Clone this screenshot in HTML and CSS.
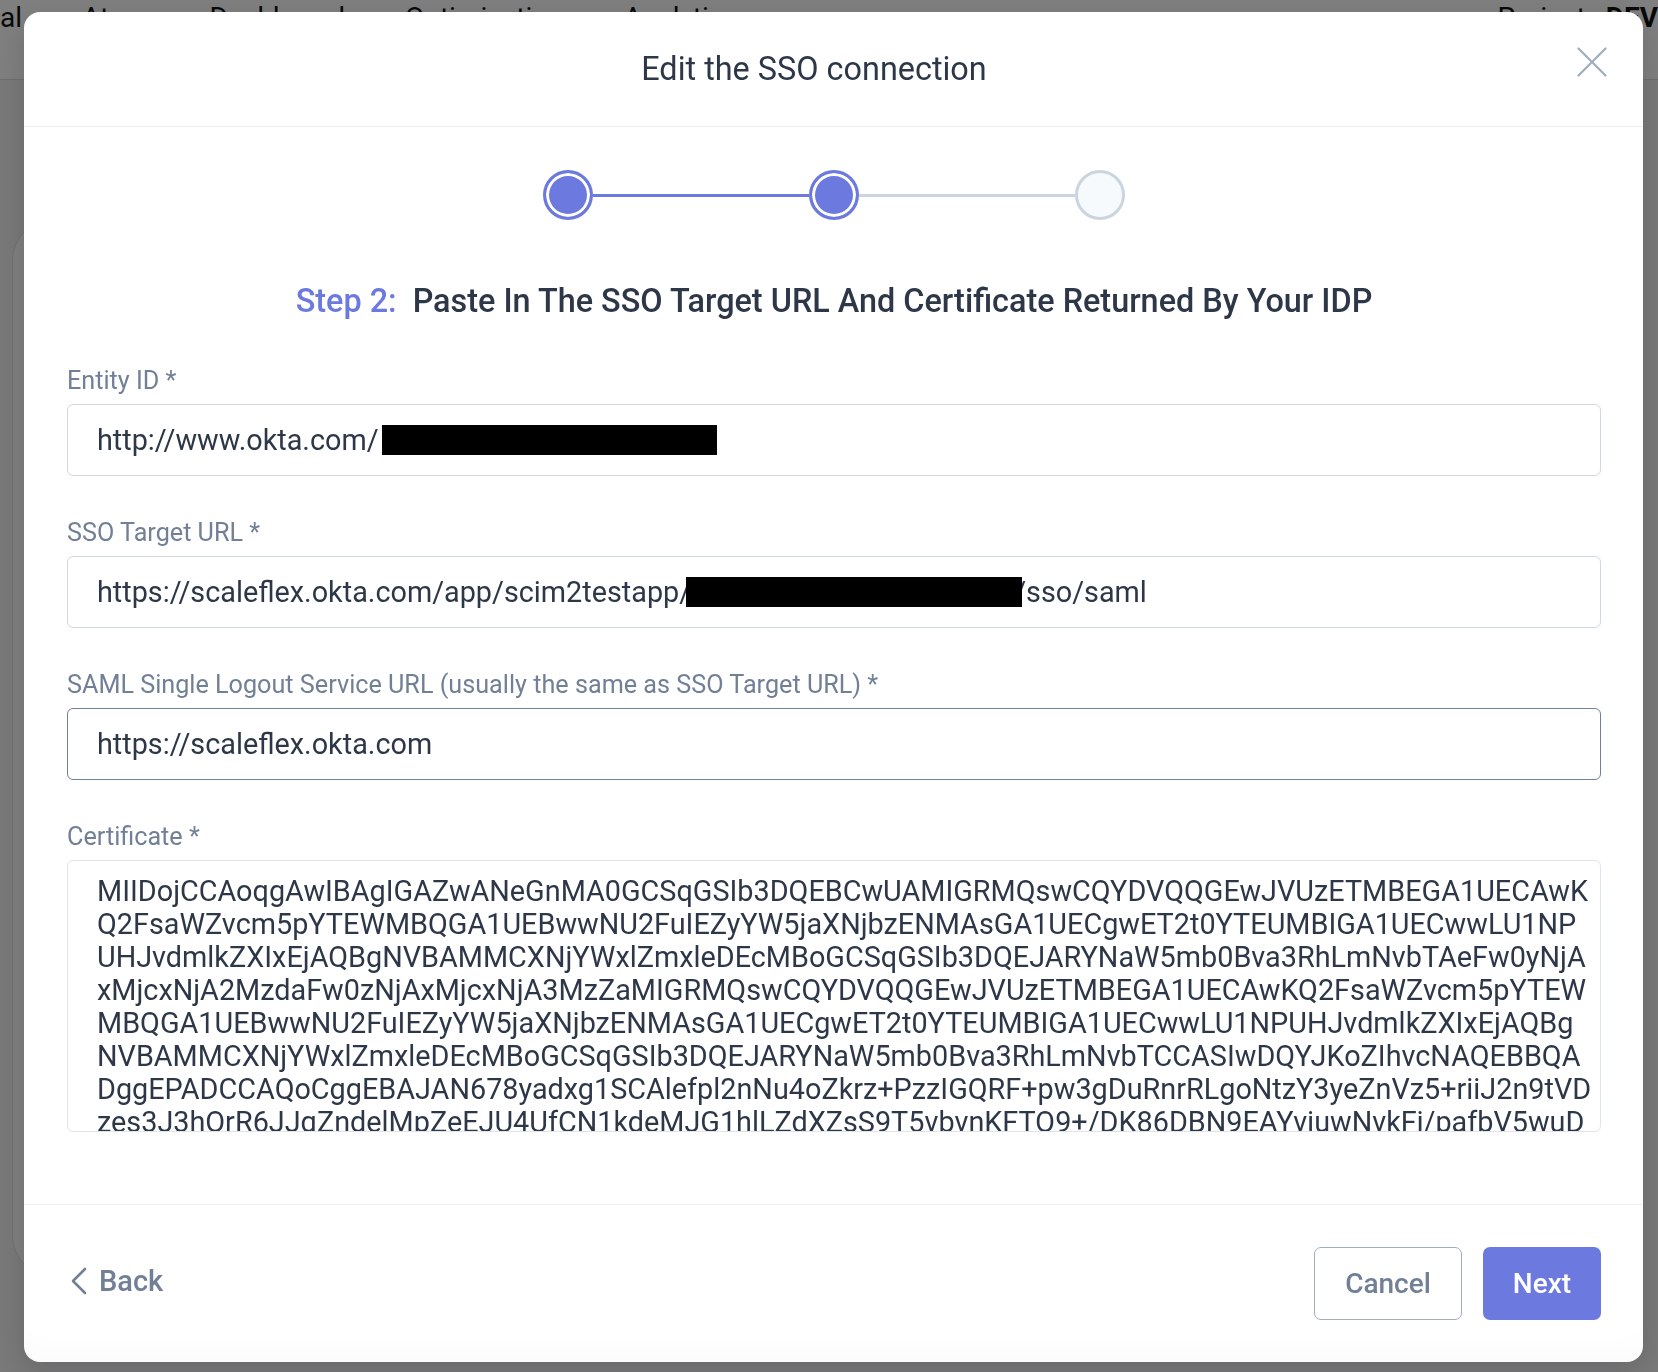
FILE: index.html
```html
<!DOCTYPE html>
<html lang="en">
<head>
<meta charset="utf-8">
<title>Edit the SSO connection</title>
<link rel="stylesheet" href="styles.css">
</head>
<body>
<div class="page">
  <header class="topnav">
    <span class="nav-item">al</span>
    <span class="nav-item">Atom</span>
    <span class="nav-item">Dashboard</span>
    <span class="nav-item">Optimization</span>
    <span class="nav-item">Analytics</span>
    <span class="nav-spacer"></span>
    <span class="nav-item">Project</span>
    <span class="nav-item nav-strong">DEV</span>
  </header>
  <main class="page-main">
    <div class="page-card"></div>
  </main>
</div>

<div class="overlay">
  <div class="modal">
    <div class="modal-header">
      <h2 class="modal-title">Edit the SSO connection</h2>
      <button class="close-btn" type="button" aria-label="Close">
        <svg width="30" height="30" viewBox="0 0 30 30" fill="none" stroke="#a0aec0" stroke-width="2.2" stroke-linecap="round"><path d="M1.5 1.5 L28.5 28.5 M28.5 1.5 L1.5 28.5"/></svg>
      </button>
    </div>

    <div class="modal-body">
      <div class="stepper">
        <span class="dot dot-active"></span>
        <span class="bar bar-active"></span>
        <span class="dot dot-active"></span>
        <span class="bar"></span>
        <span class="dot"></span>
      </div>

      <h3 class="step-title"><span class="step-num">Step 2:</span>Paste In The SSO Target URL And Certificate Returned By Your IDP</h3>

      <div class="field">
        <label class="field-label">Entity ID *</label>
        <div class="input">http://www.okta.com/<span class="redact redact-a"></span></div>
      </div>

      <div class="field">
        <label class="field-label">SSO Target URL *</label>
        <div class="input">https://scaleflex.okta.com/app/scim2testapp/<span class="redact redact-b"></span>/sso/saml</div>
      </div>

      <div class="field">
        <label class="field-label">SAML Single Logout Service URL (usually the same as SSO Target URL) *</label>
        <div class="input input-focus">https://scaleflex.okta.com</div>
      </div>

      <div class="field">
        <label class="field-label">Certificate *</label>
        <div class="textarea">MIIDojCCAoqgAwIBAgIGAZwANeGnMA0GCSqGSIb3DQEBCwUAMIGRMQswCQYDVQQGEwJVUzETMBEGA1UECAwK
Q2FsaWZvcm5pYTEWMBQGA1UEBwwNU2FuIEZyYW5jaXNjbzENMAsGA1UECgwET2t0YTEUMBIGA1UECwwLU1NP
UHJvdmlkZXIxEjAQBgNVBAMMCXNjYWxlZmxleDEcMBoGCSqGSIb3DQEJARYNaW5mb0Bva3RhLmNvbTAeFw0yNjA
xMjcxNjA2MzdaFw0zNjAxMjcxNjA3MzZaMIGRMQswCQYDVQQGEwJVUzETMBEGA1UECAwKQ2FsaWZvcm5pYTEW
MBQGA1UEBwwNU2FuIEZyYW5jaXNjbzENMAsGA1UECgwET2t0YTEUMBIGA1UECwwLU1NPUHJvdmlkZXIxEjAQBg
NVBAMMCXNjYWxlZmxleDEcMBoGCSqGSIb3DQEJARYNaW5mb0Bva3RhLmNvbTCCASIwDQYJKoZIhvcNAQEBBQA
DggEPADCCAQoCggEBAJAN678yadxg1SCAlefpl2nNu4oZkrz+PzzIGQRF+pw3gDuRnrRLgoNtzY3yeZnVz5+riiJ2n9tVD
zes3J3hOrR6JJqZndelMpZeEJU4UfCN1kdeMJG1hlLZdXZsS9T5vbvnKFTQ9+/DK86DBN9EAYvjuwNvkFj/pafbV5wuD</div>
      </div>
    </div>

    <div class="modal-footer">
      <button class="back-btn" type="button">
        <svg width="18" height="28" viewBox="0 0 18 28" fill="none" stroke="#718096" stroke-width="2.6" stroke-linecap="round" stroke-linejoin="round"><path d="M15 2 L3 14 L15 26"/></svg>
        <span>Back</span>
      </button>
      <div class="footer-actions">
        <button class="btn btn-outline" type="button">Cancel</button>
        <button class="btn btn-primary" type="button">Next</button>
      </div>
    </div>
  </div>
</div>
</body>
</html>
```

FILE: styles.css
```css
* { box-sizing: border-box; }

html, body {
  margin: 0;
  padding: 0;
  width: 1658px;
  height: 1372px;
  overflow: hidden;
}

body {
  font-family: Roboto, "Liberation Sans", Arial, sans-serif;
  background: #f2f3f5;
  color: #2d3748;
}

/* ---------- background page ---------- */
.page {
  width: 1658px;
  height: 1372px;
}

.topnav {
  height: 80px;
  display: flex;
  align-items: flex-start;
  gap: 60px;
  padding: 2px 0 0 0;
  background: #ffffff;
  border-bottom: 1px solid #dcdcdc;
  font-size: 28px;
  color: #111111;
}

.nav-item { line-height: 32px; }
.nav-strong { font-weight: 700; margin-left: -40px; }
.nav-spacer { flex: 1; }

.page-main {
  padding: 140px 0 0 12px;
}

.page-card {
  height: 1056px;
  width: 1600px;
  background: #ffffff;
  border: 1px solid #e2e2e2;
  border-radius: 40px;
}

/* ---------- overlay / modal ---------- */
.overlay {
  position: fixed;
  inset: 0;
  background: rgba(0, 0, 0, 0.5);
  display: flex;
  align-items: flex-start;
  padding: 12px 0 0 24px;
}

.modal {
  width: 1619px;
  height: 1350px;
  background: #ffffff;
  border-radius: 16px;
  display: flex;
  flex-direction: column;
  box-shadow: 0 10px 30px rgba(0, 0, 0, 0.15), inset 0 -30px 40px -30px rgba(0, 0, 0, 0.03);
}

.modal-header {
  height: 115px;
  flex: none;
  display: flex;
  align-items: center;
  padding: 0 36px 0 43px;
  border-bottom: 1px solid #edf0f4;
}

.modal-title {
  flex: 1;
  margin: 0;
  text-align: center;
  font-size: 32.4px;
  font-weight: 400;
  color: #2d3748;
  line-height: 40px;
}

.close-btn {
  width: 46px;
  height: 30px;
  align-self: flex-start;
  margin-top: 35px;
  padding: 0;
  border: 0;
  background: transparent;
  display: flex;
  justify-content: flex-end;
  cursor: pointer;
}

.modal-body {
  flex: 1;
  padding: 43px 42px 0 43px;
}

/* stepper */
.stepper {
  display: flex;
  align-items: center;
  justify-content: center;
  height: 50px;
}

.dot {
  width: 50px;
  height: 50px;
  border-radius: 50%;
  border: 3px solid #cbd5e0;
  background: #f7fafc;
  flex: none;
}

.dot-active {
  border-color: #6c7ae0;
  background: #6c7ae0;
  box-shadow: inset 0 0 0 3px #ffffff;
}

.bar {
  width: 216px;
  height: 3px;
  background: #cbd5e0;
  flex: none;
}

.bar-active { background: #6c7ae0; }

.step-title {
  margin: 61px 0 0;
  text-align: center;
  font-size: 32.4px;
  line-height: 40px;
  font-weight: 500;
  color: #2d3748;
}

.step-num {
  color: #6c7ae0;
  margin-right: 16px;
}

/* fields */
.field { margin-top: 43px; }
.step-title + .field { margin-top: 46px; }

.field-label {
  display: block;
  font-size: 25.2px;
  line-height: 28px;
  color: #718096;
  margin-bottom: 9px;
}

.input {
  height: 72px;
  border: 1px solid #cfd8e3;
  border-radius: 6px;
  padding: 0 20px 0 29px;
  display: flex;
  align-items: center;
  font-size: 28.8px;
  color: #2d3748;
  white-space: nowrap;
}

.input-focus { border-color: #718096; }

.redact {
  display: inline-block;
  background: #000000;
  height: 30px;
  flex: none;
}

.redact-a { width: 335px; margin-left: 3px; }
.redact-b { width: 336px; margin-left: -5px; margin-right: -8px; position: relative; z-index: 1; }

.textarea {
  height: 272px;
  border: 1px solid #dfe4ea;
  border-radius: 6px;
  padding: 14px 10px 0 29px;
  font-size: 28.8px;
  line-height: 33px;
  white-space: pre;
  overflow: hidden;
  color: #2d3748;
}

/* footer */
.modal-footer {
  height: 158px;
  flex: none;
  border-top: 1px solid #edf0f4;
  display: flex;
  align-items: center;
  justify-content: space-between;
  padding: 0 42px 0 46px;
}

.back-btn {
  display: flex;
  align-items: center;
  gap: 11px;
  border: 0;
  background: transparent;
  padding: 0;
  margin-bottom: 6px;
  font-family: inherit;
  font-size: 29px;
  font-weight: 500;
  color: #718096;
  cursor: pointer;
}

.footer-actions {
  display: flex;
  gap: 21px;
}

.btn {
  height: 73px;
  border-radius: 7px;
  font-family: inherit;
  font-size: 28px;
  font-weight: 500;
  cursor: pointer;
}

.btn-outline {
  width: 148px;
  border: 1px solid #a0aec0;
  background: #ffffff;
  color: #718096;
}

.btn-primary {
  width: 118px;
  border: 0;
  background: #6c7ae0;
  color: #ffffff;
}
```
